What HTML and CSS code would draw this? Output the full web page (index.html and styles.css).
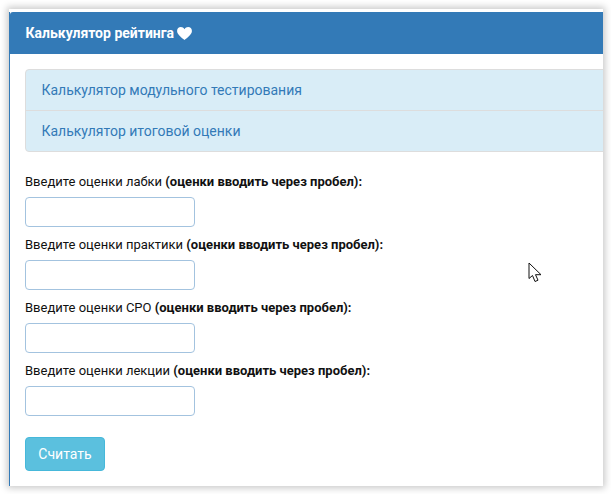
FILE: index.html
```html
<!DOCTYPE html>
<html lang="ru">
<head>
<meta charset="utf-8">
<title>Калькулятор рейтинга</title>
<link rel="stylesheet" href="styles.css">
</head>
<body>
<div class="window">
  <section class="panel">
    <header class="panel-heading">
      <span>Калькулятор рейтинга</span>
      <svg class="heart" viewBox="0 0 16 14" width="15" height="13" aria-hidden="true"><path d="M8 14C6 12 0 8.300 0 4.200 0 1.800 1.800 0 4.100 0 5.700 0 7.200.9 8 2.300 8.800.9 10.300 0 11.900 0 14.200 0 16 1.800 16 4.200 16 8.300 10 12 8 14Z"/></svg>
    </header>
    <div class="panel-body">
      <div class="list">
        <a class="list-item">Калькулятор модульного тестирования</a>
        <a class="list-item">Калькулятор итоговой оценки</a>
      </div>
      <form class="form">
        <div class="field">
          <label>Введите оценки лабки <b>(оценки вводить через пробел):</b></label>
          <input type="text">
        </div>
        <div class="field">
          <label>Введите оценки практики <b>(оценки вводить через пробел):</b></label>
          <input type="text">
        </div>
        <div class="field">
          <label>Введите оценки СРО <b>(оценки вводить через пробел):</b></label>
          <input type="text">
        </div>
        <div class="field">
          <label>Введите оценки лекции <b>(оценки вводить через пробел):</b></label>
          <input type="text">
        </div>
        <button type="button" class="btn">Считать</button>
      </form>
    </div>
  </section>
  <svg class="cursor" viewBox="0 0 14 21" width="14" height="21" aria-hidden="true"><path d="M1 1V16.500L4.500 13.500 7 19.500 10 18.200 7.500 12.700H13Z"/></svg>
</div>
</body>
</html>
```
FILE: styles.css
```css
html, body {
  margin: 0;
  height: 100%;
  background: #fff;
}
body {
  padding: 9px 8px 8px 9px;
  box-sizing: border-box;
  height: 494px;
  overflow: hidden;
  font-family: Roboto, "Liberation Sans", sans-serif;
}
.window {
  position: relative;
  height: 477px;
  padding-top: 3px;
  box-sizing: border-box;
  background: #fff;
  box-shadow: 0 0 7px 2px rgba(0, 0, 0, 0.22);
  overflow: visible;
}
.panel {
  height: 474px;
  box-sizing: border-box;
  border-left: 1px solid #337ab7;
  overflow: hidden;
  background: #fff;
}
.panel-heading {
  height: 42px;
  display: flex;
  align-items: center;
  gap: 3px;
  padding-left: 15.500px;
  background: #337ab7;
  color: #fff;
  font-size: 14px;
  font-weight: 700;
  border-top-left-radius: 3px;
}
.heart {
  fill: #fff;
}
.panel-body {
  padding: 15px 0 0 15px;
}
.list {
  margin-right: -4px;
  border: 1px solid #ddd;
  border-radius: 4px;
  background: #d9edf7;
  margin-bottom: 21px;
}
.list-item {
  display: flex;
  align-items: center;
  height: 40px;
  padding-left: 15.500px;
  font-size: 14px;
  color: #337ab7;
}
.list-item + .list-item {
  border-top: 1px solid #ddd;
}
.form {
  display: flex;
  flex-direction: column;
  align-items: flex-start;
}
.field {
  height: 63px;
}
label {
  display: block;
  height: 21px;
  margin-bottom: 3px;
  font-size: 13px;
  line-height: 18px;
  color: #111;
}
label b {
  font-weight: 700;
}
input {
  display: block;
  width: 170px;
  height: 30px;
  box-sizing: border-box;
  padding: 4px 10px;
  border: 1px solid #a3c3df;
  border-radius: 4px;
  background: #fff;
  outline: none;
}
.btn {
  margin-top: 12px;
  width: 80px;
  height: 34px;
  border: 1px solid #46b8da;
  border-radius: 4px;
  background: #5bc0de;
  color: #fff;
  font-family: inherit;
  font-size: 14px;
  padding: 0;
}
.cursor {
  position: absolute;
  left: 519px;
  top: 253px;
  fill: #fff;
  stroke: #111;
  stroke-width: 1;
}
```
